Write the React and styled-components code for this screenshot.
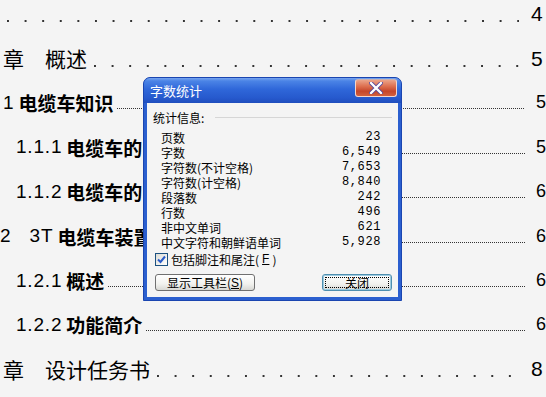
import React from 'react';
import styled, { createGlobalStyle, css } from 'styled-components';

const GlobalStyle = createGlobalStyle`
  html, body {
    margin: 0;
    padding: 0;
    background: #f4f4f4;
  }
  body {
    width: 546px;
    height: 397px;
    overflow: hidden;
    font-family: "Noto Sans CJK SC", "Noto Sans", sans-serif;
    color: #000;
  }
`;

const entries = [
  { kind: 'chapter', indent: 0, page: '4' },
  { kind: 'chapter', indent: 3, title: '章\u3000概述', page: '5' },
  { kind: 'section', indent: 3, num: '1', title: '电缆车知识', page: '5' },
  { kind: 'section', indent: 16, num: '1.1.1', title: '电缆车的', page: '5' },
  { kind: 'section', indent: 16, num: '1.1.2', title: '电缆车的', page: '6' },
  { kind: 'section', indent: 0, num: '2\u00a0\u00a0 3T', title: '电缆车装置', page: '6' },
  { kind: 'section', indent: 16, num: '1.2.1', title: '概述', page: '6' },
  { kind: 'section', indent: 16, num: '1.2.2', title: '功能简介', page: '6' },
  { kind: 'chapter', indent: 3, title: '章\u3000设计任务书', page: '8' },
];

const stats = [
  ['页数', '23'],
  ['字数', '6,549'],
  ['字符数(不计空格)', '7,653'],
  ['字符数(计空格)', '8,840'],
  ['段落数', '242'],
  ['行数', '496'],
  ['非中文单词', '621'],
  ['中文字符和朝鲜语单词', '5,928'],
];

const Page = styled.div`
  position: relative;
  width: 546px;
  height: 397px;
  overflow: hidden;
  background: #f4f4f4;
`;

const Toc = styled.div`
  display: flex;
  flex-direction: column;
  margin-top: -8px;
`;

const Row = styled.div`
  display: flex;
  align-items: center;
  height: 44.4px;
  padding-left: ${(p) => p.$indent}px;
  white-space: nowrap;
`;

const Num = styled.span`
  font-family: "Liberation Sans", Arial, sans-serif;
  font-size: 19px;
  letter-spacing: 0.8px;
  margin-right: 4px;
  white-space: pre;
`;

const Title = styled.span`
  font-size: ${(p) => (p.$chapter ? 21 : 19)}px;
  font-weight: ${(p) => (p.$chapter ? 400 : 700)};
  line-height: 1;
  white-space: pre;
`;

const Leader = styled.span`
  flex: 1;
  align-self: center;
  margin-left: 4px;
  ${(p) =>
    p.$chapter
      ? css`
          height: 2px;
          margin-top: 14px;
          background-image: linear-gradient(to right, #333 2px, transparent 2px);
          background-size: 17.6px 2px;
          background-position: 3px 0;
          background-repeat: repeat-x;
        `
      : css`
          height: 1px;
          margin-top: 12px;
          background-image: linear-gradient(to right, #333 1px, transparent 1px);
          background-size: 2px 1px;
          background-repeat: repeat-x;
        `}
`;

const PageNo = styled.span`
  flex: none;
  width: ${(p) => (p.$chapter ? 15 : 10)}px;
  margin-left: ${(p) => (p.$chapter ? 12 : 11)}px;
  font-family: "Liberation Sans", Arial, sans-serif;
  font-size: ${(p) => (p.$chapter ? 21 : 18)}px;
`;

/* ---------- Word count dialog ---------- */

const Dialog = styled.div`
  position: absolute;
  left: 143px;
  top: 77px;
  width: 259px;
  height: 224px;
  display: flex;
  flex-direction: column;
  box-sizing: border-box;
  border-radius: 7px 7px 0 0;
  background: #2b5fcf;
  border: 1px solid #1a45b0;
  padding: 0 3px 3px;
  font-size: 12px;
`;

const TitleBar = styled.div`
  height: 25px;
  margin: 0 -3px;
  padding: 0 4px 0 6px;
  display: flex;
  align-items: flex-start;
  justify-content: space-between;
  border-radius: 6px 6px 0 0;
  background: linear-gradient(
    #77a4ef 0%,
    #4b84e6 12%,
    #2f67d9 45%,
    #2659cd 80%,
    #1f4dbd 100%
  );
`;

const TitleText = styled.span`
  color: #fff;
  font-size: 13px;
  line-height: 25px;
`;

const CloseButton = styled.div`
  width: 40px;
  height: 16px;
  margin-top: 1px;
  display: flex;
  align-items: center;
  justify-content: center;
  border: 1px solid #f4d6cc;
  border-top-color: #c8b0b0;
  border-radius: 3px;
  background: linear-gradient(#eba48a 0%, #dd6f4f 40%, #c5462b 70%, #d2603e 100%);
`;

const Body = styled.div`
  flex: 1;
  background: #f4f4f4;
  padding: 6px 4px 0 6px;
  display: flex;
  flex-direction: column;
`;

const GroupHead = styled.div`
  display: flex;
  align-items: center;
  gap: 11px;
  height: 16px;
  &::after {
    content: '';
    flex: 1;
    height: 1px;
    background: #d6d6d6;
    margin-right: 2px;
  }
`;

const StatTable = styled.div`
  display: grid;
  grid-template-columns: 1fr auto;
  grid-auto-rows: 15px;
  margin: 5px 13px 0 8px;
  line-height: 15px;
`;

const StatValue = styled.span`
  text-align: right;
  font-family: "Liberation Mono", monospace;
  font-size: 12px;
  letter-spacing: 0.6px;
`;

const CheckRow = styled.label`
  display: flex;
  align-items: center;
  gap: 3px;
  margin: 1px 0 0 2px;
  height: 16px;
`;

const CheckBox = styled.span`
  width: 11px;
  height: 11px;
  border: 1px solid #1c5180;
  background: linear-gradient(135deg, #dcdcd6, #fff);
  display: flex;
  align-items: center;
  justify-content: center;
`;

const ButtonRow = styled.div`
  display: flex;
  justify-content: space-between;
  margin: 7px 2px 0 2px;
`;

const Button = styled.div`
  width: ${(p) => p.$width}px;
  height: 17px;
  box-sizing: border-box;
  display: flex;
  align-items: center;
  justify-content: center;
  border-radius: 3px;
  border: 1px solid ${(p) => (p.$focused ? '#4f8fb0' : '#707070')};
  background: linear-gradient(#ffffff 0%, #f1f1ee 60%, #d8d8d4 100%);
  position: relative;
  ${(p) =>
    p.$focused &&
    css`
      box-shadow: inset 0 0 0 1px #9ccbe0;
      &::before {
        content: '';
        position: absolute;
        inset: 2px;
        border: 1px dotted #000;
      }
    `}
`;

const Mnemonic = styled.span`
  text-decoration: underline;
  text-underline-offset: 1px;
  font-family: "Liberation Sans", sans-serif;
`;

function TocRow({ entry }) {
  const chapter = entry.kind === 'chapter';
  return (
    <Row $indent={entry.indent}>
      {entry.num && <Num>{entry.num}</Num>}
      {entry.title && <Title $chapter={chapter}>{entry.title}</Title>}
      <Leader $chapter={chapter} />
      <PageNo $chapter={chapter}>{entry.page}</PageNo>
    </Row>
  );
}

function WordCountDialog() {
  return (
    <Dialog>
      <TitleBar>
        <TitleText>字数统计</TitleText>
        <CloseButton>
          <svg width="14" height="12" viewBox="0 0 14 12">
            <path
              d="M2 1 L12 11 M12 1 L2 11"
              stroke="#5a4a9a"
              strokeWidth="4"
              strokeLinecap="round"
            />
            <path
              d="M2 1 L12 11 M12 1 L2 11"
              stroke="#fff"
              strokeWidth="2.4"
              strokeLinecap="round"
            />
          </svg>
        </CloseButton>
      </TitleBar>
      <Body>
        <GroupHead>统计信息:</GroupHead>
        <StatTable>
          {stats.map(([label, value]) => (
            <React.Fragment key={label}>
              <span>{label}</span>
              <StatValue>{value}</StatValue>
            </React.Fragment>
          ))}
        </StatTable>
        <CheckRow>
          <CheckBox>
            <svg width="9" height="9" viewBox="0 0 9 9">
              <path d="M1 4.5 L3.5 7 L8 1.5" fill="none" stroke="#2a5bc8" strokeWidth="2" />
            </svg>
          </CheckBox>
          包括脚注和尾注(<Mnemonic>F</Mnemonic>)
        </CheckRow>
        <ButtonRow>
          <Button $width={100}>
            显示工具栏(<Mnemonic>S</Mnemonic>)
          </Button>
          <Button $width={70} $focused>
            关闭
          </Button>
        </ButtonRow>
      </Body>
    </Dialog>
  );
}

export default function App() {
  return (
    <Page>
      <GlobalStyle />
      <Toc>
        {entries.map((e, i) => (
          <TocRow key={i} entry={e} />
        ))}
      </Toc>
      <WordCountDialog />
    </Page>
  );
}
